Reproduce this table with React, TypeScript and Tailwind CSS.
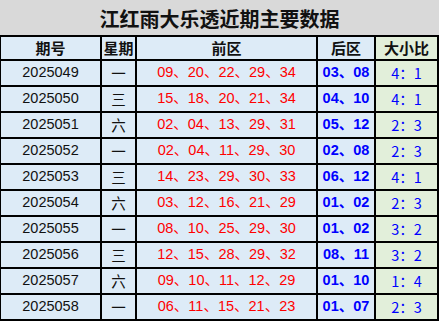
const ROWS = [
  { id: '2025049', day: '一', front: '09、20、22、29、34', back: '03、08', ratio: '4：1' },
  { id: '2025050', day: '三', front: '15、18、20、21、34', back: '04、10', ratio: '4：1' },
  { id: '2025051', day: '六', front: '02、04、13、29、31', back: '05、12', ratio: '2：3' },
  { id: '2025052', day: '一', front: '02、04、11、29、30', back: '02、08', ratio: '2：3' },
  { id: '2025053', day: '三', front: '14、23、29、30、33', back: '06、12', ratio: '4：1' },
  { id: '2025054', day: '六', front: '03、12、16、21、29', back: '01、02', ratio: '2：3' },
  { id: '2025055', day: '一', front: '08、10、25、29、30', back: '01、02', ratio: '3：2' },
  { id: '2025056', day: '三', front: '12、15、28、29、32', back: '08、11', ratio: '3：2' },
  { id: '2025057', day: '六', front: '09、10、11、12、29', back: '01、10', ratio: '1：4' },
  { id: '2025058', day: '一', front: '06、11、15、21、23', back: '01、07', ratio: '2：3' },
];

const cell = 'flex items-center justify-center bg-[#ddebf7]';
const green = 'flex items-center justify-center bg-[#e2efda]';

export default function App() {
  return (
    <div className="w-[439px] h-[321px] bg-[#d9d9d9] font-['Liberation_Sans','Noto_Sans_CJK_SC',sans-serif] text-[#111]">
      {/* Title */}
      <div className="h-[35px] flex items-center justify-center pt-[2px] text-[20px] font-bold font-['Noto_Sans_CJK_SC',sans-serif] tracking-[0px]">
        江红雨大乐透近期主要数据
      </div>

      {/* Table */}
      <div className="bg-black pl-[1px] pr-[2px] py-[2px]">
        <div className="grid grid-cols-[99px_33px_179px_56px_61px] grid-rows-[22px_repeat(10,24px)] gap-[2px]">
          <div className={`${cell} text-[15px] font-bold font-['Noto_Sans_CJK_SC',sans-serif]`}>期号</div>
          <div className={`${cell} text-[15px] font-bold font-['Noto_Sans_CJK_SC',sans-serif]`}>星期</div>
          <div className={`${cell} text-[15px] font-bold font-['Noto_Sans_CJK_SC',sans-serif]`}>前区</div>
          <div className={`${cell} text-[15px] font-bold font-['Noto_Sans_CJK_SC',sans-serif]`}>后区</div>
          <div className={`${green} text-[15px] font-bold font-['Noto_Sans_CJK_SC',sans-serif]`}>大小比</div>

          {ROWS.map((r) => (
            <div key={r.id} className="contents">
              <div className={`${cell} text-[14.5px]`}>{r.id}</div>
              <div className={`${cell} text-[14.5px] font-['Noto_Sans_CJK_SC',sans-serif]`}>{r.day}</div>
              <div className={`${cell} text-[14.5px] text-[#ff0000] whitespace-nowrap`}>{r.front}</div>
              <div className={`${cell} text-[14.5px] text-[#0000ff] font-bold whitespace-nowrap`}>{r.back}</div>
              <div className={`${green} text-[14.5px] text-[#0000ff] font-['Noto_Sans_CJK_SC',sans-serif] whitespace-nowrap`}>{r.ratio}</div>
            </div>
          ))}
        </div>
      </div>
    </div>
  );
}
